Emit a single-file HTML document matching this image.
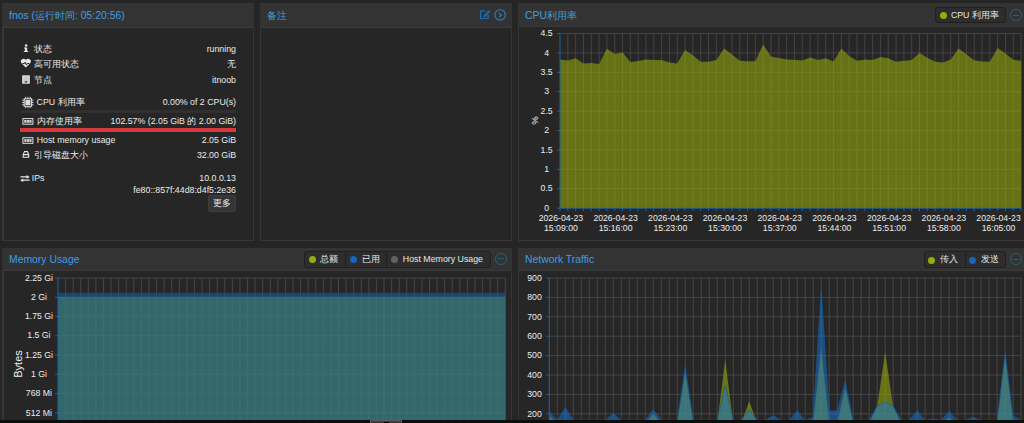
<!DOCTYPE html>
<html><head><meta charset="utf-8">
<style>
*{margin:0;padding:0;box-sizing:border-box}
html,body{width:1024px;height:423px;overflow:hidden;background:#252525;font-family:"Liberation Sans", sans-serif;color:#e0e0e0}
.p{position:absolute;background:#363636}
.hd{position:absolute;left:0;top:0;right:0;height:24px;background:#333}
.tt{position:absolute;left:7px;top:6px;font-size:10.4px;color:#3d9ee5;white-space:nowrap}
.bd{position:absolute;left:2px;top:24px;right:1px;bottom:1px;background:#262626;border-top:1px solid #3a3a3a}
.row{position:absolute;left:20px;width:216px;font-size:9px;height:12px;line-height:12px;white-space:nowrap}
.row .k{position:absolute;left:14px;top:0}
.row .v{position:absolute;right:0;top:0}
.ic{position:absolute;left:0;top:0;width:12px;height:12px}
.bar{position:absolute;left:20px;width:216px;height:3px;background:#303030}
.t{position:absolute;font-size:8.8px;line-height:12px;white-space:nowrap;color:#ebebeb}
.t.r{right:788px}
svg text.al{font-family:"Liberation Sans", sans-serif;font-size:8.7px;fill:#ededed}
.lg{position:absolute;height:17px;background:#2d2d2d;border:1px solid #1f1f1f;border-radius:3px;font-size:8.8px;color:#e8e8e8;white-space:nowrap}
.lg .it{position:absolute;top:0;height:15px;line-height:15px}
.lg .sep{position:absolute;top:0;bottom:0;width:1px;background:#1f1f1f}
.dot{position:absolute;top:4px;width:7px;height:7px;border-radius:50%}
.mc{position:absolute;width:12px;height:12px;border:1px solid #285f7c;border-radius:50%}
.mc:after{content:"";position:absolute;left:2px;right:2px;top:4.5px;height:1px;background:#285f7c}
</style></head><body>

<!-- Panel 1 status -->
<div class="p" style="left:2px;top:3px;width:252px;height:238px">
 <div class="hd"><div class="tt">fnos (运行时间: 05:20:56)</div></div>
 <div class="bd"></div>
</div>
<div class="t" style="left:34.2px;top:42.5px">状态</div><div class="t r" style="top:42.5px">running</div>
<div class="t" style="left:34.2px;top:57.9px">高可用状态</div><div class="t r" style="top:57.9px">无</div>
<div class="t" style="left:34.2px;top:73.6px">节点</div><div class="t r" style="top:73.6px">itnoob</div>
<div class="t" style="left:36.6px;top:95.8px">CPU 利用率</div><div class="t r" style="top:95.8px">0.00% of 2 CPU(s)</div>
<div class="bar" style="top:109.5px"></div>
<div class="t" style="left:36.6px;top:114.8px">内存使用率</div><div class="t r" style="top:114.8px">102.57% (2.05 GiB 的 2.00 GiB)</div>
<div class="bar" style="top:128.3px;background:#d63a3e;height:3.5px"></div>
<div class="t" style="left:36.7px;top:134.2px">Host memory usage</div><div class="t r" style="top:134.2px">2.05 GiB</div>
<div class="t" style="left:34.2px;top:149.4px">引导磁盘大小</div><div class="t r" style="top:149.4px">32.00 GiB</div>
<div class="t" style="left:31.8px;top:172px">IPs</div><div class="t r" style="top:172px">10.0.0.13</div>
<div class="t r" style="top:183.6px">fe80::857f:44d8:d4f5:2e36</div>
<div style="position:absolute;left:208px;top:195.3px;width:28px;height:16.4px;background:#353535;border:1px solid #3e3e3e;border-radius:2px;font-size:8.8px;line-height:15.6px;text-align:center;color:#e6e6e6">更多</div>
<svg style="position:absolute;left:0;top:0" width="260" height="240" viewBox="0 0 260 240">
 <g fill="#e6e6e6">
  <circle cx="26.1" cy="45.6" r="1.25"/>
  <path d="M24 47.4H27.2V51H28.2V52.1H23.8V51H24.9V48.4H24Z"/>
  <path d="M25.85 67.6L21.5 63.2A2.55 2.55 0 0 1 25.85 59.9A2.55 2.55 0 0 1 30.2 63.2Z"/>
  <rect x="22.2" y="75.3" width="7.6" height="8.4"/>
  <rect x="20.3" y="119" width="0" height="0"/>
 </g>
 <path d="M22.4 63.5H24.5L25.3 62L26.4 65L27.3 63.5H29.3" stroke="#262626" stroke-width="1" fill="none"/>
 <rect x="23.4" y="76.3" width="5.2" height="6.5" fill="#c8c8c8"/>
 <rect x="24.8" y="81.3" width="2.4" height="1.2" fill="#333"/>
 <g stroke="#e6e6e6" fill="none">
  <rect x="24.2" y="98.8" width="7.4" height="7.4" stroke-width="1"/>
  <path d="M25.6 96.8V98.8M27.9 96.8V98.8M30.2 96.8V98.8M25.6 106.2V108.2M27.9 106.2V108.2M30.2 106.2V108.2M22.2 100.2H24.2M22.2 102.5H24.2M22.2 104.8H24.2M31.6 100.2H33.6M31.6 102.5H33.6M31.6 104.8H33.6" stroke-width="0.85"/>
 </g>
 <rect x="25.4" y="100" width="5" height="5" fill="#e0e0e0"/>
 <g stroke="#e0e0e0" fill="none" stroke-width="1">
  <rect x="22.9" y="118.6" width="10" height="5.6"/>
  <rect x="22.9" y="137.7" width="10" height="5.6"/>
 </g>
 <g fill="#d8d8d8">
  <rect x="24.3" y="120" width="2.1" height="2.8"/><rect x="26.85" y="120" width="2.1" height="2.8"/><rect x="29.4" y="120" width="2.1" height="2.8"/>
  <rect x="24.3" y="139.1" width="2.1" height="2.8"/><rect x="26.85" y="139.1" width="2.1" height="2.8"/><rect x="29.4" y="139.1" width="2.1" height="2.8"/>
 </g>
 <path d="M23.2 154.6L24.5 151.6H27.4L28.7 154.6V157.2H23.2Z M23.2 154.6H28.7" stroke="#e6e6e6" stroke-width="1.1" fill="none"/>
 <path d="M20.4 176.9H27M22.9 180.2H29.6" stroke="#e6e6e6" stroke-width="1.3" fill="none"/>
 <path d="M26.6 175.1L29.7 176.9L26.6 178.7Z M23.2 178.4L20.1 180.2L23.2 182Z" fill="#e6e6e6"/>
</svg>

<!-- Panel 2 notes -->
<div class="p" style="left:260px;top:3px;width:252px;height:238px">
 <div class="hd"><div class="tt">备注</div></div>
 <div class="bd" style="left:1px"></div>
</div>
<svg style="position:absolute;left:478px;top:8px" width="30" height="14" viewBox="0 0 30 14">
 <path d="M7.2 2.9H2.5V10.5H10.1V6.8" stroke="#1d6db5" stroke-width="1.2" fill="none" stroke-linejoin="round"/>
 <path d="M5.3 9.3L5.7 7.5L10.5 2.7A0.95 0.95 0 0 1 11.9 4.1L7.1 8.9Z" fill="#1d6db5"/>
 <circle cx="22.1" cy="6.9" r="5.2" stroke="#2a86bb" stroke-width="1.05" fill="none"/>
 <path d="M20.9 4.5L23.3 6.9L20.9 9.3" stroke="#2a86bb" stroke-width="1.05" fill="none"/>
</svg>

<!-- Panel 3 CPU -->
<div class="p" style="left:518px;top:3px;width:520px;height:238px">
 <div class="hd" style="height:23px"><div class="tt">CPU利用率</div></div>
 <div class="bd" style="top:23px;left:1px"></div>
</div>
<div class="lg" style="left:934.5px;top:6.5px;width:71px;height:16px"><span class="dot" style="left:4.3px;top:4.8px;background:#94ae0a"></span><span class="it" style="left:15.4px;top:0;height:14px;line-height:14px">CPU 利用率</span></div>
<div class="mc" style="left:1010px;top:9px"></div>

<!-- Panel 4 Memory -->
<div class="p" style="left:2px;top:248px;width:510px;height:180px">
 <div class="hd" style="height:22px"><div class="tt" style="top:5.5px">Memory Usage</div></div>
 <div class="bd" style="top:22px"></div>
</div>
<div class="lg" style="left:303.5px;top:250.5px;width:187px;height:17px">
 <span class="dot" style="left:4.2px;top:4.6px;background:#94ae0a"></span><span class="it" style="left:15.5px">总额</span>
 <span class="sep" style="left:40.6px"></span>
 <span class="dot" style="left:45.2px;top:4.6px;background:#1565c0"></span><span class="it" style="left:57px">已用</span>
 <span class="sep" style="left:81.9px"></span>
 <span class="dot" style="left:86.2px;top:4.6px;background:#616161"></span><span class="it" style="left:98.3px">Host Memory Usage</span>
</div>
<div class="mc" style="left:494.5px;top:252.5px"></div>

<!-- Panel 5 Network -->
<div class="p" style="left:518px;top:248px;width:520px;height:180px">
 <div class="hd" style="height:22px"><div class="tt" style="top:5.5px">Network Traffic</div></div>
 <div class="bd" style="top:22px;left:1px"></div>
</div>
<div class="lg" style="left:923.5px;top:251px;width:82.5px;height:16.5px">
 <span class="dot" style="left:3.5px;top:4.6px;background:#94ae0a"></span><span class="it" style="left:15.1px">传入</span>
 <span class="sep" style="left:40px"></span>
 <span class="dot" style="left:44.5px;top:4.6px;background:#1565c0"></span><span class="it" style="left:56.1px">发送</span>
</div>
<div class="mc" style="left:1010px;top:253px"></div>

<svg style="position:absolute;left:0;top:0" width="1024" height="423" viewBox="0 0 1024 423">
<path d="M560 208.1H1021.1 M560 188.7H1021.1 M560 169.3H1021.1 M560 149.9H1021.1 M560 130.5H1021.1 M560 111.1H1021.1 M560 91.7H1021.1 M560 72.3H1021.1 M560 52.9H1021.1 M560 33.5H1021.1 M567.82 33.5V208.1 M575.63 33.5V208.1 M583.45 33.5V208.1 M591.26 33.5V208.1 M599.08 33.5V208.1 M606.89 33.5V208.1 M614.71 33.5V208.1 M622.52 33.5V208.1 M630.34 33.5V208.1 M638.15 33.5V208.1 M645.97 33.5V208.1 M653.78 33.5V208.1 M661.6 33.5V208.1 M669.41 33.5V208.1 M677.23 33.5V208.1 M685.04 33.5V208.1 M692.86 33.5V208.1 M700.67 33.5V208.1 M708.49 33.5V208.1 M716.31 33.5V208.1 M724.12 33.5V208.1 M731.94 33.5V208.1 M739.75 33.5V208.1 M747.57 33.5V208.1 M755.38 33.5V208.1 M763.2 33.5V208.1 M771.01 33.5V208.1 M778.83 33.5V208.1 M786.64 33.5V208.1 M794.46 33.5V208.1 M802.27 33.5V208.1 M810.09 33.5V208.1 M817.9 33.5V208.1 M825.72 33.5V208.1 M833.53 33.5V208.1 M841.35 33.5V208.1 M849.16 33.5V208.1 M856.98 33.5V208.1 M864.79 33.5V208.1 M872.61 33.5V208.1 M880.43 33.5V208.1 M888.24 33.5V208.1 M896.06 33.5V208.1 M903.87 33.5V208.1 M911.69 33.5V208.1 M919.5 33.5V208.1 M927.32 33.5V208.1 M935.13 33.5V208.1 M942.95 33.5V208.1 M950.76 33.5V208.1 M958.58 33.5V208.1 M966.39 33.5V208.1 M974.21 33.5V208.1 M982.02 33.5V208.1 M989.84 33.5V208.1 M997.65 33.5V208.1 M1005.47 33.5V208.1 M1013.28 33.5V208.1 M1021.1 33.5V208.1" stroke="#444444" stroke-width="1" fill="none"/>
<polygon points="560,208.1 560,59.4 567.82,60.4 575.63,58.3 583.45,63.5 591.26,63.1 599.08,63.9 606.89,48.7 614.71,53.9 622.52,52.6 630.34,61.9 638.15,61 645.97,59.4 653.78,60.1 661.6,60.1 669.41,62.5 677.23,63.4 685.04,50 692.86,55.3 700.67,61.7 708.49,61.7 716.31,60.1 724.12,48.5 731.94,54.6 739.75,60.8 747.57,61.2 755.38,61.2 763.2,44.6 771.01,56.4 778.83,58 786.64,59.4 794.46,59.8 802.27,60.4 810.09,57.6 817.9,60.1 825.72,58.3 833.53,61.4 841.35,48.5 849.16,56 856.98,60.8 864.79,59.4 872.61,60.1 880.43,56.9 888.24,58.3 896.06,61.7 903.87,60.8 911.69,60.1 919.5,53.1 927.32,57.8 935.13,61.7 942.95,62.4 950.76,59.6 958.58,48.4 966.39,54.2 974.21,60.3 982.02,61.5 989.84,61.7 997.65,47.9 1005.47,53.6 1013.28,59.7 1021.1,60.9 1021.1,208.1" fill="rgb(156,176,10)" fill-opacity="0.55"/>
<path d="M560 33.5V208.1H1021.1 M557 208.1H560 M557 188.7H560 M557 169.3H560 M557 149.9H560 M557 130.5H560 M557 111.1H560 M557 91.7H560 M557 72.3H560 M557 52.9H560 M557 33.5H560 M560 208.1V211.1 M567.82 208.1V211.1 M575.63 208.1V211.1 M583.45 208.1V211.1 M591.26 208.1V211.1 M599.08 208.1V211.1 M606.89 208.1V211.1 M614.71 208.1V211.1 M622.52 208.1V211.1 M630.34 208.1V211.1 M638.15 208.1V211.1 M645.97 208.1V211.1 M653.78 208.1V211.1 M661.6 208.1V211.1 M669.41 208.1V211.1 M677.23 208.1V211.1 M685.04 208.1V211.1 M692.86 208.1V211.1 M700.67 208.1V211.1 M708.49 208.1V211.1 M716.31 208.1V211.1 M724.12 208.1V211.1 M731.94 208.1V211.1 M739.75 208.1V211.1 M747.57 208.1V211.1 M755.38 208.1V211.1 M763.2 208.1V211.1 M771.01 208.1V211.1 M778.83 208.1V211.1 M786.64 208.1V211.1 M794.46 208.1V211.1 M802.27 208.1V211.1 M810.09 208.1V211.1 M817.9 208.1V211.1 M825.72 208.1V211.1 M833.53 208.1V211.1 M841.35 208.1V211.1 M849.16 208.1V211.1 M856.98 208.1V211.1 M864.79 208.1V211.1 M872.61 208.1V211.1 M880.43 208.1V211.1 M888.24 208.1V211.1 M896.06 208.1V211.1 M903.87 208.1V211.1 M911.69 208.1V211.1 M919.5 208.1V211.1 M927.32 208.1V211.1 M935.13 208.1V211.1 M942.95 208.1V211.1 M950.76 208.1V211.1 M958.58 208.1V211.1 M966.39 208.1V211.1 M974.21 208.1V211.1 M982.02 208.1V211.1 M989.84 208.1V211.1 M997.65 208.1V211.1 M1005.47 208.1V211.1 M1013.28 208.1V211.1 M1021.1 208.1V211.1" stroke="#1b64a0" stroke-width="1" fill="none"/>
<text x="546.6" y="210.8" text-anchor="middle" class="al">0</text>
<text x="546.6" y="191.4" text-anchor="middle" class="al">0.5</text>
<text x="546.6" y="172" text-anchor="middle" class="al">1</text>
<text x="546.6" y="152.6" text-anchor="middle" class="al">1.5</text>
<text x="546.6" y="133.2" text-anchor="middle" class="al">2</text>
<text x="546.6" y="113.8" text-anchor="middle" class="al">2.5</text>
<text x="546.6" y="94.4" text-anchor="middle" class="al">3</text>
<text x="546.6" y="75" text-anchor="middle" class="al">3.5</text>
<text x="546.6" y="55.6" text-anchor="middle" class="al">4</text>
<text x="546.6" y="36.2" text-anchor="middle" class="al">4.5</text>
<text x="560.9" y="220.8" text-anchor="middle" class="al">2026-04-23</text>
<text x="560.9" y="230.8" text-anchor="middle" class="al">15:09:00</text>
<text x="615.61" y="220.8" text-anchor="middle" class="al">2026-04-23</text>
<text x="615.61" y="230.8" text-anchor="middle" class="al">15:16:00</text>
<text x="670.31" y="220.8" text-anchor="middle" class="al">2026-04-23</text>
<text x="670.31" y="230.8" text-anchor="middle" class="al">15:23:00</text>
<text x="725.02" y="220.8" text-anchor="middle" class="al">2026-04-23</text>
<text x="725.02" y="230.8" text-anchor="middle" class="al">15:30:00</text>
<text x="779.73" y="220.8" text-anchor="middle" class="al">2026-04-23</text>
<text x="779.73" y="230.8" text-anchor="middle" class="al">15:37:00</text>
<text x="834.43" y="220.8" text-anchor="middle" class="al">2026-04-23</text>
<text x="834.43" y="230.8" text-anchor="middle" class="al">15:44:00</text>
<text x="889.14" y="220.8" text-anchor="middle" class="al">2026-04-23</text>
<text x="889.14" y="230.8" text-anchor="middle" class="al">15:51:00</text>
<text x="943.85" y="220.8" text-anchor="middle" class="al">2026-04-23</text>
<text x="943.85" y="230.8" text-anchor="middle" class="al">15:58:00</text>
<text x="998.55" y="220.8" text-anchor="middle" class="al">2026-04-23</text>
<text x="998.55" y="230.8" text-anchor="middle" class="al">16:05:00</text>
<text transform="translate(537.6,120.6) rotate(-90)" text-anchor="middle" class="al" style="font-size:9.6px">%</text>
<path d="M58 278H505.3 M58 297.26H505.3 M58 316.52H505.3 M58 335.78H505.3 M58 355.04H505.3 M58 374.3H505.3 M58 393.56H505.3 M58 412.82H505.3 M65.58 278V430 M73.16 278V430 M80.74 278V430 M88.33 278V430 M95.91 278V430 M103.49 278V430 M111.07 278V430 M118.65 278V430 M126.23 278V430 M133.81 278V430 M141.39 278V430 M148.98 278V430 M156.56 278V430 M164.14 278V430 M171.72 278V430 M179.3 278V430 M186.88 278V430 M194.46 278V430 M202.05 278V430 M209.63 278V430 M217.21 278V430 M224.79 278V430 M232.37 278V430 M239.95 278V430 M247.53 278V430 M255.12 278V430 M262.7 278V430 M270.28 278V430 M277.86 278V430 M285.44 278V430 M293.02 278V430 M300.6 278V430 M308.18 278V430 M315.77 278V430 M323.35 278V430 M330.93 278V430 M338.51 278V430 M346.09 278V430 M353.67 278V430 M361.25 278V430 M368.84 278V430 M376.42 278V430 M384 278V430 M391.58 278V430 M399.16 278V430 M406.74 278V430 M414.32 278V430 M421.91 278V430 M429.49 278V430 M437.07 278V430 M444.65 278V430 M452.23 278V430 M459.81 278V430 M467.39 278V430 M474.97 278V430 M482.56 278V430 M490.14 278V430 M497.72 278V430 M505.3 278V430" stroke="#464646" stroke-width="1" fill="none"/>
<rect x="58" y="292.7" width="447.3" height="4" fill="rgb(22,80,138)" fill-opacity="0.774"/>
<rect x="58" y="296.7" width="447.3" height="200" fill="rgb(56,123,127)" fill-opacity="0.774"/>
<path d="M58 278V430 M55 278H58 M55 297.26H58 M55 316.52H58 M55 335.78H58 M55 355.04H58 M55 374.3H58 M55 393.56H58 M55 412.82H58" stroke="#1b64a0" stroke-width="1" fill="none"/>
<text x="38.9" y="280.7" text-anchor="middle" class="al">2.25 Gi</text>
<text x="38.9" y="299.96" text-anchor="middle" class="al">2 Gi</text>
<text x="38.9" y="319.22" text-anchor="middle" class="al">1.75 Gi</text>
<text x="38.9" y="338.48" text-anchor="middle" class="al">1.5 Gi</text>
<text x="38.9" y="357.74" text-anchor="middle" class="al">1.25 Gi</text>
<text x="38.9" y="377" text-anchor="middle" class="al">1 Gi</text>
<text x="38.9" y="396.26" text-anchor="middle" class="al">768 Mi</text>
<text x="38.9" y="415.52" text-anchor="middle" class="al">512 Mi</text>
<text transform="translate(21.5,364) rotate(-90)" text-anchor="middle" class="al" style="font-size:11px">Bytes</text>
<path d="M549.3 278H1021.1 M549.3 297.4H1021.1 M549.3 316.8H1021.1 M549.3 336.2H1021.1 M549.3 355.6H1021.1 M549.3 375H1021.1 M549.3 394.4H1021.1 M549.3 413.8H1021.1 M557.3 278V430 M565.29 278V430 M573.29 278V430 M581.29 278V430 M589.28 278V430 M597.28 278V430 M605.28 278V430 M613.27 278V430 M621.27 278V430 M629.27 278V430 M637.26 278V430 M645.26 278V430 M653.26 278V430 M661.25 278V430 M669.25 278V430 M677.25 278V430 M685.24 278V430 M693.24 278V430 M701.24 278V430 M709.23 278V430 M717.23 278V430 M725.23 278V430 M733.22 278V430 M741.22 278V430 M749.22 278V430 M757.21 278V430 M765.21 278V430 M773.21 278V430 M781.2 278V430 M789.2 278V430 M797.19 278V430 M805.19 278V430 M813.19 278V430 M821.18 278V430 M829.18 278V430 M837.18 278V430 M845.17 278V430 M853.17 278V430 M861.17 278V430 M869.16 278V430 M877.16 278V430 M885.16 278V430 M893.15 278V430 M901.15 278V430 M909.15 278V430 M917.14 278V430 M925.14 278V430 M933.14 278V430 M941.13 278V430 M949.13 278V430 M957.13 278V430 M965.12 278V430 M973.12 278V430 M981.12 278V430 M989.11 278V430 M997.11 278V430 M1005.11 278V430 M1013.1 278V430 M1021.1 278V430" stroke="#464646" stroke-width="1" fill="none"/>
<polygon points="549.3,440 549.3,416 557.3,423 565.29,423 573.29,423 581.29,423 589.28,423 597.28,423 605.28,423 613.27,423 621.27,423 629.27,423 637.26,423 645.26,423 653.26,414 661.25,423 669.25,423 677.25,423 685.24,372 693.24,423 701.24,423 709.23,423 717.23,423 725.23,359.6 733.22,423 741.22,423 749.22,401.2 757.21,423 765.21,423 773.21,423 781.2,423 789.2,423 797.19,423 805.19,423 813.19,423 821.18,347.5 829.18,423 837.18,423 845.17,388 853.17,423 861.17,423 869.16,423 877.16,407 885.16,352 893.15,407 901.15,423 909.15,423 917.14,423 925.14,423 933.14,423 941.13,423 949.13,417.5 957.13,423 965.12,423 973.12,423 981.12,423 989.11,423 997.11,423 1005.11,355 1013.1,423 1021.1,423 1021.1,440" fill="rgb(156,176,10)" fill-opacity="0.55" />
<polygon points="549.3,440 549.3,411.6 557.3,420.2 565.29,407.7 573.29,420.2 581.29,420.2 589.28,420.2 597.28,420.2 605.28,420.2 613.27,413.6 621.27,420.2 629.27,420.2 637.26,420.2 645.26,420.2 653.26,409.7 661.25,420.2 669.25,420.2 677.25,420.2 685.24,366.5 693.24,420.2 701.24,420.2 709.23,420.2 717.23,420.2 725.23,385.5 733.22,420.2 741.22,420.2 749.22,409.6 757.21,420.2 765.21,420.2 773.21,415.6 781.2,420.2 789.2,420.2 797.19,411 805.19,420.2 813.19,417.5 821.18,290.1 829.18,411 837.18,411 845.17,381.3 853.17,420.2 861.17,420.2 869.16,420.2 877.16,405.8 885.16,402.1 893.15,405.8 901.15,420.2 909.15,420.2 917.14,410.9 925.14,420.2 933.14,419 941.13,420.2 949.13,411.3 957.13,420.2 965.12,420.2 973.12,417.3 981.12,420.2 989.11,420.2 997.11,420.2 1005.11,353.1 1013.1,415.7 1021.1,420.2 1021.1,440" fill="rgb(18,118,216)" fill-opacity="0.5" stroke="rgba(20,90,160,0.6)" stroke-width="1"/>
<path d="M549.3 278V430 M546.3 278H549.3 M546.3 297.4H549.3 M546.3 316.8H549.3 M546.3 336.2H549.3 M546.3 355.6H549.3 M546.3 375H549.3 M546.3 394.4H549.3 M546.3 413.8H549.3" stroke="#1b64a0" stroke-width="1" fill="none"/>
<text x="534.5" y="280.7" text-anchor="middle" class="al">900</text>
<text x="534.5" y="300.1" text-anchor="middle" class="al">800</text>
<text x="534.5" y="319.5" text-anchor="middle" class="al">700</text>
<text x="534.5" y="338.9" text-anchor="middle" class="al">600</text>
<text x="534.5" y="358.3" text-anchor="middle" class="al">500</text>
<text x="534.5" y="377.7" text-anchor="middle" class="al">400</text>
<text x="534.5" y="397.1" text-anchor="middle" class="al">300</text>
<text x="534.5" y="416.5" text-anchor="middle" class="al">200</text>
</svg>

<div style="position:absolute;left:0;top:420px;width:1024px;height:3px;background:#0e0e0e"></div>
<div style="position:absolute;left:370px;top:420px;width:32px;height:3px;background:#3c3c3c;border:1px solid #5a5a5a;border-bottom:none"></div><div style="position:absolute;left:383.5px;top:421.5px;width:5px;height:2px;background:#000"></div>
</body></html>
